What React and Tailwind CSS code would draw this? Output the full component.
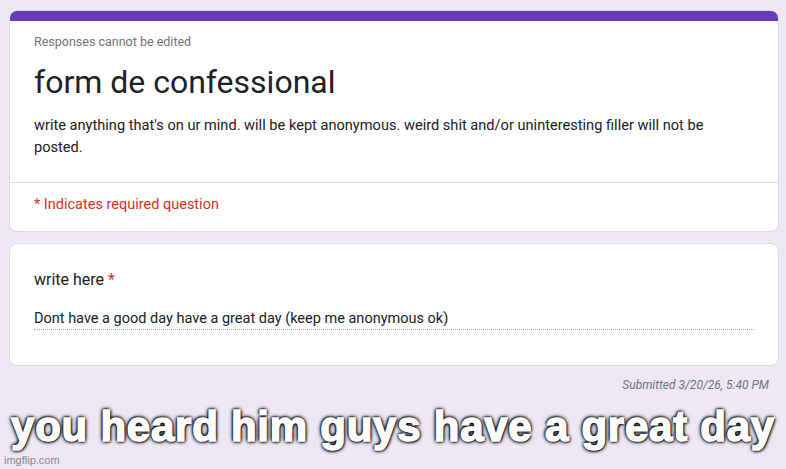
export default function App() {
  return (
    <div className="w-[786px] h-[469px] bg-[#ede7f6] relative overflow-hidden" style={{ fontFamily: 'Roboto, "Liberation Sans", sans-serif' }}>
      <div className="pt-[10px] pl-[9px] pr-[7px] flex flex-col">
        <div className="bg-white rounded-[8px] border border-[#dadce0] overflow-hidden">
          <div className="h-[10px] bg-[#673ab7]" />
          <div className="px-[24px] pt-[13px] pb-[24px]">
            <div className="text-[12.5px] leading-[16px] text-[#70757a]">Responses cannot be edited</div>
            <div className="text-[32px] leading-[40px] text-[#202124] mt-[12px]">form de confessional</div>
            <div className="text-[14.6px] leading-[22px] text-[#202124] mt-[12px] pr-[40px]">
              write anything that's on ur mind. will be kept anonymous. weird shit and/or uninteresting filler will not be posted.
            </div>
          </div>
          <div className="border-t border-[#dadce0] px-[24px] pt-[12px] pb-[16px] text-[14.5px] leading-[20px] text-[#d93025]">
            * Indicates required question
          </div>
        </div>
        <div className="bg-white rounded-[8px] border border-[#dadce0] mt-[11px] px-[24px] pt-[24px] pb-[35px]">
          <div className="text-[16px] leading-[24px] text-[#202124]">
            write here <span className="text-[#d93025]">*</span>
          </div>
          <div className="mt-[17px] w-[720px] text-[14.5px] leading-[20px] text-[#202124] border-b border-dotted border-[#9aa0a6]">
            Dont have a good day have a great day (keep me anonymous ok)
          </div>
        </div>
        <div className="text-right text-[12px] leading-[16px] italic text-[#70757a] mt-[11px] pr-[10px]">Submitted 3/20/26, 5:40 PM</div>
      </div>
      <div
        className="absolute left-0 right-0 top-[403px] text-center text-white font-black text-[42px] leading-[48px] tracking-[0.75px] [-webkit-text-stroke:1.6px_white]"
        style={{
          fontFamily: '"Liberation Sans", Arial, sans-serif',
          textShadow: '0 0 2px #000, 0 0 3px #000, 0 0 4px #000, 0 0 5px #000, 1px 1px 2px #000, -1px -1px 2px #000',
        }}
      >
        you heard him guys have a great day
      </div>
      <div className="absolute left-[4px] bottom-[2px] text-[11px] leading-[13px] text-[#8a8a8a]" style={{ fontFamily: '"Liberation Sans", Arial, sans-serif' }}>
        imgflip.com
      </div>
    </div>
  );
}
